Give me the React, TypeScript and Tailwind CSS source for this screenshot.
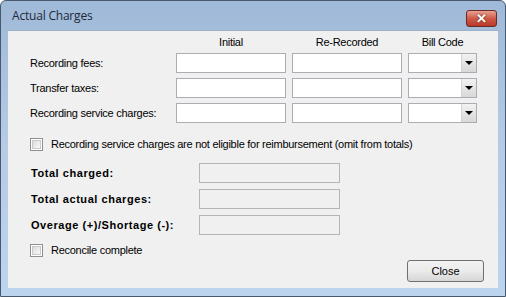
import React from 'react'

const font = { fontFamily: '"Liberation Sans", Arial, sans-serif' }

const TextBox = ({ className = '' }: { className?: string }) => (
  <div className={`h-[20px] border border-[#abadb3] bg-white ${className}`} />
)

const ComboBox = () => (
  <div className="h-[20px] border border-[#abadb3] bg-white flex justify-end">
    <div className="w-[15px] h-full border-l border-[#d4d4d4] bg-gradient-to-b from-[#f2f2f2] to-[#d8d8d8] flex items-center justify-center">
      <div className="w-0 h-0 border-l-[4px] border-r-[4px] border-t-[4px] border-l-transparent border-r-transparent border-t-black" />
    </div>
  </div>
)

const CheckBox = ({ label }: { label: string }) => (
  <div className="flex items-center gap-[8px]">
    <div className="w-[13px] h-[13px] border border-[#8f8f8f] bg-white p-[1px]">
      <div className="w-full h-full bg-gradient-to-br from-[#dcdcdc] to-[#f8f8f8] border border-[#c9c9c9]" />
    </div>
    <span className="text-[11px] tracking-[-0.27px] text-black leading-none">{label}</span>
  </div>
)

const rows = ['Recording fees:', 'Transfer taxes:', 'Recording service charges:']
const totals = ['Total charged:', 'Total actual charges:', 'Overage (+)/Shortage (-):']

export default function App() {
  return (
    <div style={font} className="w-[506px] h-[297px] bg-white">
      <div className="w-[506px] h-[297px] rounded-t-[6px] border border-[#49596d] bg-gradient-to-b from-[#9fb9d8] via-[#b6cce6] to-[#bdd4ee] flex flex-col">
        {/* title bar */}
        <div className="h-[29px] flex items-start justify-between pl-[11px] pr-[8px]">
          <span className="mt-[9px] text-[12px] tracking-[-0.2px] text-[#1e2a3a] leading-none" style={{ fontFamily: '"Open Sans", "Liberation Sans", sans-serif' }}>
            Actual Charges
          </span>
          <div className="mt-[9px] w-[31px] h-[17px] rounded-[3px] border border-[#6b2b22] bg-gradient-to-b from-[#e8a093] via-[#cf5a45] to-[#b8382a] flex items-center justify-center">
            <span className="text-white text-[13px] font-bold leading-none" style={{ textShadow: '0 0 2px #4a1a12' }}>✕</span>
          </div>
        </div>

        {/* client area */}
        <div className="mx-[7px] mb-[8px] flex-1 bg-[#f0f0f0] border-t border-[#9fb1c8] flex flex-col pl-[22px] pr-[14px] text-black">
          <div className="grid grid-cols-[140px_110px_110px_69px] gap-x-[6px] gap-y-[5px] items-center w-[447px]">
            <div className="h-[17px]" />
            <div className="h-[17px] text-[11px] tracking-[-0.27px] text-center pt-[6px] leading-none">Initial</div>
            <div className="h-[17px] text-[11px] tracking-[-0.27px] text-center pt-[6px] leading-none">Re-Recorded</div>
            <div className="h-[17px] text-[11px] tracking-[-0.27px] text-center pt-[6px] leading-none">Bill Code</div>
            {rows.map((r) => (
              <React.Fragment key={r}>
                <div className="text-[11px] tracking-[-0.27px] leading-none">{r}</div>
                <TextBox />
                <TextBox />
                <ComboBox />
              </React.Fragment>
            ))}
          </div>

          <div className="mt-[15px]">
            <CheckBox label="Recording service charges are not eligible for reimbursement (omit from totals)" />
          </div>

          <div className="mt-[12px] flex flex-col gap-[6px] pl-[1px]">
            {totals.map((t) => (
              <div key={t} className="flex items-center">
                <div className="w-[168px] text-[11px] tracking-[0.55px] font-bold leading-none">{t}</div>
                <div className="w-[141px] h-[20px] border border-[#b5b5b5] bg-[#f0f0f0]" />
              </div>
            ))}
          </div>

          <div className="mt-[9px]">
            <CheckBox label="Reconcile complete" />
          </div>

          <div className="flex justify-end mt-[3px]">
            <button className="w-[77px] h-[22px] rounded-[3px] border border-[#707070] bg-gradient-to-b from-[#f2f2f2] via-[#ebebeb] to-[#d6d6d6] text-[11px] text-black leading-none">
              Close
            </button>
          </div>
        </div>
      </div>
    </div>
  )
}
